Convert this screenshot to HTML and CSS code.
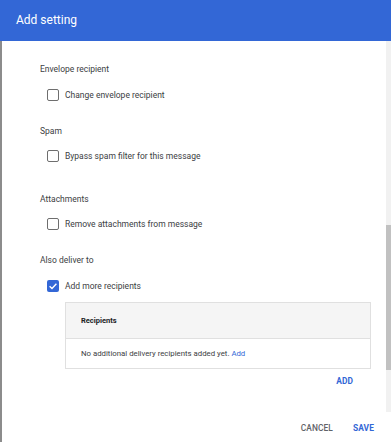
FILE: index.html
```html
<!DOCTYPE html>
<html>
<head>
<meta charset="utf-8">
<link rel="stylesheet" href="styles.css">
</head>
<body>
<div class="dialog">
  <div class="header">Add setting</div>
  <div class="body">
    <div class="main">
      <div class="scroll">
        <div class="label l1">Envelope recipient</div>
        <div class="check-row r1"><span class="box"></span><span>Change envelope recipient</span></div>
        <div class="label l2">Spam</div>
        <div class="check-row r2"><span class="box"></span><span>Bypass spam filter for this message</span></div>
        <div class="label l3">Attachments</div>
        <div class="check-row r3"><span class="box"></span><span>Remove attachments from message</span></div>
        <div class="label l4">Also deliver to</div>
        <div class="check-row r4"><span class="box checked"><svg viewBox="0 0 12 12" width="12" height="12"><path d="M2.6 6.2 L5 8.5 L9.4 3.8" fill="none" stroke="#fff" stroke-width="1.4"/></svg></span><span>Add more recipients</span></div>
        <div class="table">
          <div class="thead">Recipients</div>
          <div class="tbody">No additional delivery recipients added yet. <span class="link">Add</span></div>
        </div>
        <div class="add-row"><span class="btn blue">ADD</span></div>
      </div>
      <div class="scrollbar"><div class="thumb"></div></div>
    </div>
    <div class="footer">
      <span class="btn gray">CANCEL</span>
      <span class="btn blue">SAVE</span>
    </div>
  </div>
</div>
</body>
</html>
```

FILE: styles.css
```css
html, body {
  margin: 0;
  padding: 0;
  background: #fff;
}
body {
  font-family: Roboto, "Liberation Sans", Arial, sans-serif;
  color: #3c4043;
}
.dialog {
  width: 391px;
  height: 442px;
  display: flex;
  flex-direction: column;
  overflow: hidden;
}
.header {
  height: 41px;
  flex: none;
  background: #3367d6;
  color: #fff;
  font-size: 12px;
  line-height: 41px;
  padding-left: 16px;
  box-sizing: border-box;
}
.body {
  flex: 1;
  display: flex;
  flex-direction: column;
  border-left: 2px solid #8c8c8c;
}
.main {
  height: 371px;
  display: flex;
  flex: none;
}
.scroll {
  flex: 1;
  padding: 22px 15px 0 38px;
  box-sizing: border-box;
}
.scrollbar {
  width: 5px;
  background: #f1f1f1;
  flex: none;
}
.thumb {
  margin-top: 184px;
  height: 145px;
  background: #c1c1c1;
}
.label {
  font-size: 8.5px;
  line-height: 12px;
  height: 12px;
  color: #3c4043;
}
.check-row {
  display: flex;
  align-items: center;
  height: 12px;
  font-size: 8.5px;
  line-height: 12px;
  padding-left: 7px;
  gap: 6px;
  color: #3c4043;
}
.box {
  width: 12px;
  height: 12px;
  box-sizing: border-box;
  border: 1.5px solid #6e6e6e;
  border-radius: 2px;
  flex: none;
  display: flex;
}
.box.checked {
  border: none;
  background: #3367d6;
}
.r1 { margin-top: 14px; }
.l2 { margin-top: 24px; }
.r2 { margin-top: 13px; }
.l3 { margin-top: 31px; }
.r3 { margin-top: 13px; }
.l4 { margin-top: 24px; }
.r4 { margin-top: 14px; }
.table {
  margin-top: 10px;
  margin-left: 25px;
  border: 1px solid #e0e0e0;
}
.thead {
  height: 35px;
  background: #f5f5f5;
  border-bottom: 1px solid #e0e0e0;
  font-size: 7.5px;
  font-weight: 700;
  line-height: 35px;
  padding-left: 15px;
  color: #202124;
}
.tbody {
  height: 29px;
  line-height: 29px;
  font-size: 7.8px;
  padding-left: 15px;
  color: #3c4043;
}
.link {
  color: #3367d6;
}
.add-row {
  display: flex;
  justify-content: flex-end;
  margin-top: 6px;
  padding-right: 18px;
}
.btn {
  font-size: 8.4px;
  font-weight: 500;
  line-height: 12px;
  letter-spacing: 0.1px;
}
.btn.blue { color: #3367d6; font-weight: 700; }
.btn.gray { color: #5f6368; }
.footer {
  flex: 1;
  display: flex;
  justify-content: flex-end;
  align-items: center;
  gap: 20px;
  padding: 1px 17px 0 0;
}
```
